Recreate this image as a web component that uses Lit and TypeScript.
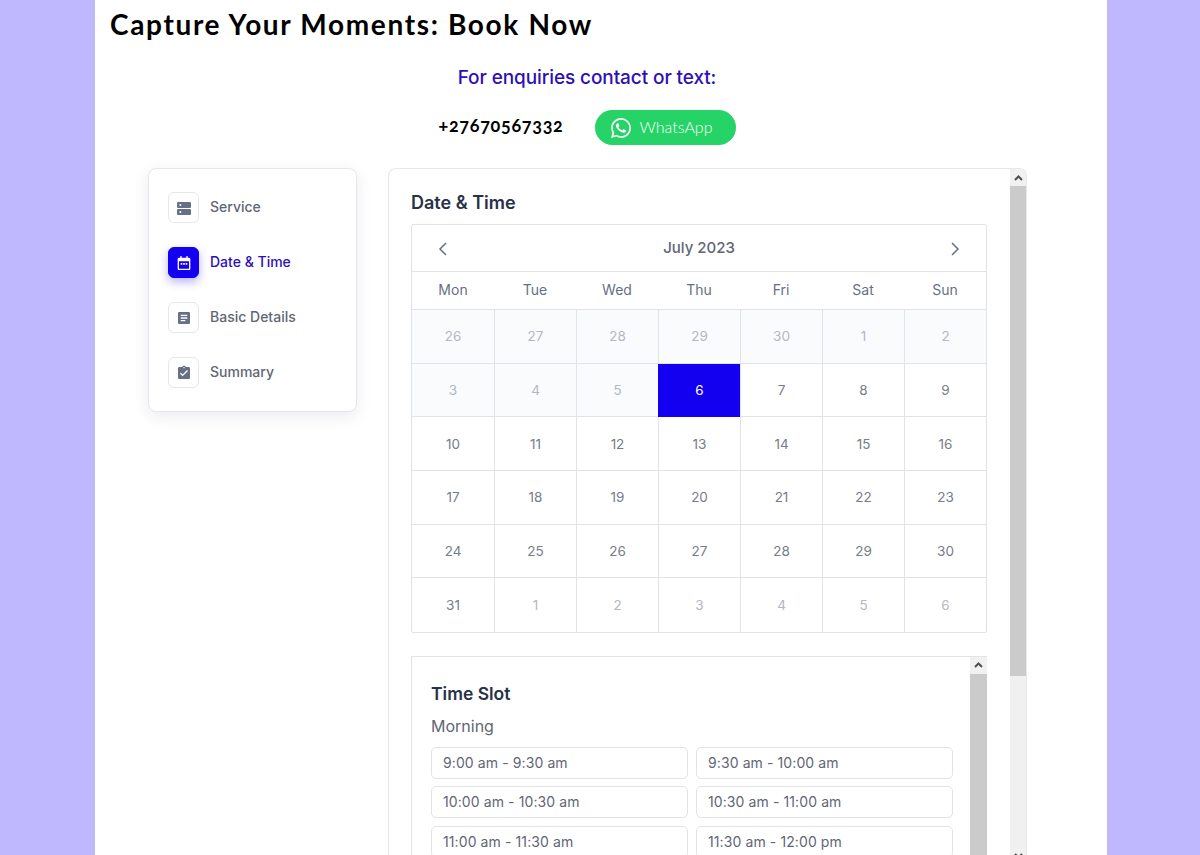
import { LitElement, html, css, svg } from "lit";
import { customElement } from "lit/decorators.js";

const steps = [
  { label: "Service", icon: "dns", active: false },
  { label: "Date & Time", icon: "cal", active: true },
  { label: "Basic Details", icon: "article", active: false },
  { label: "Summary", icon: "check", active: false },
];

const icons: Record<string, unknown> = {
  dns: svg`<path fill-rule="evenodd" d="M3.500 3h17c1.100 0 2 .9 2 2v5c0 1.100-.9 2-2 2h-17c-1.100 0-2-.9-2-2V5c0-1.100.9-2 2-2zM6.500 6a1.500 1.500 0 100 3 1.500 1.500 0 000-3zM3.500 13.500h17c1.100 0 2 .9 2 2v5c0 1.100-.9 2-2 2h-17c-1.100 0-2-.9-2-2v-5c0-1.100.9-2 2-2zM6.500 16.500a1.500 1.500 0 100 3 1.500 1.500 0 000-3z"/>`,
  cal: svg`<path fill-rule="evenodd" d="M6.500 1.500h2V4h7V1.500h2V4h2c1.100 0 2 .9 2 2v14.500c0 1.100-.9 2-2 2h-15c-1.100 0-2-.9-2-2V6c0-1.100.9-2 2-2h2V1.500zM4.500 9.500v11h15v-11h-15zM7 12h2.500v2.500H7V12zm3.750 0h2.500v2.500h-2.500V12zM14.500 12H17v2.500h-2.500V12z"/>`,
  article: svg`<path d="M19 3H5c-1.100 0-2 .9-2 2v14c0 1.100.9 2 2 2h14c1.100 0 2-.9 2-2V5c0-1.100-.9-2-2-2zm-5 14H7v-2h7v2zm3-4H7v-2h10v2zm0-4H7V7h10v2z"/>`,
  check: svg`<path d="M19 3h-4.180C14.400 1.840 13.300 1 12 1c-1.300 0-2.400.84-2.820 2H5c-1.100 0-2 .9-2 2v14c0 1.100.9 2 2 2h14c1.100 0 2-.9 2-2V5c0-1.100-.9-2-2-2zm-7 0c.55 0 1 .45 1 1s-.45 1-1 1-1-.45-1-1 .45-1 1-1zm-2 14l-4-4 1.410-1.410L10 14.170l6.590-6.590L18 9l-8 8z"/>`,
};

const whatsapp = "M17.472 14.382c-.297-.149-1.758-.867-2.03-.967-.273-.099-.471-.148-.67.15-.197.297-.767.966-.94 1.164-.173.199-.347.223-.644.075-.297-.15-1.255-.463-2.39-1.475-.883-.788-1.48-1.761-1.653-2.059-.173-.297-.018-.458.13-.606.134-.133.298-.347.446-.52.149-.174.198-.298.298-.497.099-.198.05-.371-.025-.52-.075-.149-.669-1.612-.916-2.207-.242-.579-.487-.5-.669-.51-.173-.008-.371-.01-.57-.01-.198 0-.52.074-.792.372-.272.297-1.04 1.016-1.04 2.479 0 1.462 1.065 2.875 1.213 3.074.149.198 2.096 3.2 5.077 4.487.709.306 1.262.489 1.694.625.712.227 1.36.195 1.871.118.571-.085 1.758-.719 2.006-1.413.248-.694.248-1.289.173-1.413-.074-.124-.272-.198-.57-.347m-5.421 7.403h-.004a9.87 9.87 0 01-5.031-1.378l-.361-.214-3.741.982.998-3.648-.235-.374a9.86 9.86 0 01-1.51-5.26c.001-5.45 4.436-9.884 9.888-9.884 2.64 0 5.122 1.03 6.988 2.898a9.825 9.825 0 012.893 6.994c-.003 5.45-4.437 9.884-9.885 9.884m8.413-18.297A11.815 11.815 0 0012.05 0C5.495 0 .16 5.335.157 11.892c0 2.096.547 4.142 1.588 5.945L.057 24l6.305-1.654a11.882 11.882 0 005.683 1.448h.005c6.554 0 11.89-5.335 11.893-11.893a11.821 11.821 0 00-3.48-8.413z";

const weekdays = ["Mon", "Tue", "Wed", "Thu", "Fri", "Sat", "Sun"];
type Day = { n: number; kind: "past" | "sel" | "now" | "next" };
const days: Day[] = [
  ...[26, 27, 28, 29, 30, 1, 2, 3, 4, 5].map((n) => ({ n, kind: "past" as const })),
  { n: 6, kind: "sel" as const },
  ...Array.from({ length: 25 }, (_, i) => ({ n: i + 7, kind: "now" as const })),
  ...[1, 2, 3, 4, 5, 6].map((n) => ({ n, kind: "next" as const })),
];

const slots = [
  "9:00 am - 9:30 am", "9:30 am - 10:00 am",
  "10:00 am - 10:30 am", "10:30 am - 11:00 am",
  "11:00 am - 11:30 am", "11:30 am - 12:00 pm",
];

@customElement("app-root")
export class AppRoot extends LitElement {
  static styles = css`
    :host { display: block; height: 855px; overflow: hidden; background: #bfb8ff; font-family: "Inter", "Liberation Sans", sans-serif; }
    .page { width: 1012px; height: 855px; margin-left: 95px; background: #fff; overflow: hidden; }
    h1 { margin: 0; padding: 5px 0 0 15px; height: 44px; box-sizing: border-box; font: 700 28px/38px "Lato", sans-serif; letter-spacing: 1.65px; color: #000; }
    .enq { margin: 18px 0 0; width: 984px; text-align: center; font: 500 19px/32px "Inter", sans-serif; letter-spacing: -.1px; color: #2e0fb8; }
    .contact { display: flex; align-items: center; justify-content: center; gap: 31px; width: 984px; margin-top: 16px; height: 35px; }
    .phone { padding-bottom: 5px; font: 700 18px/24px "Lato", sans-serif; letter-spacing: .7px; font-variant-numeric: oldstyle-nums; color: #000; }
    .wa { display: flex; align-items: center; gap: 9px; width: 141px; height: 35px; box-sizing: border-box; padding: 0 0 2px 16px; border-radius: 18px; background: #25d366; color: #fff; font: 300 16px/20px "Lato", sans-serif; }
    .wa svg { width: 20px; height: 20px; fill: #fff; display: block; margin-top: 2px; }
    .main { display: flex; align-items: flex-start; margin: 23px 0 0 53px; gap: 31px; }
    .steps { width: 209px; height: 244px; box-sizing: border-box; padding: 23px 19px; border: 1px solid #e5e7eb; border-radius: 8px; background: #fff; box-shadow: 0 4px 16px rgba(30, 30, 90, .09); display: flex; flex-direction: column; gap: 24px; }
    .step { display: flex; align-items: center; gap: 11px; font: 500 14px/20px "Inter", sans-serif; color: #5f6675; }
    .step.on { color: #2e0fb8; }
    .label { padding-bottom: 2px; }
    .badge { width: 31px; height: 31px; box-sizing: border-box; border: 1px solid #e5e7eb; border-radius: 6px; background: #fff; display: flex; align-items: center; justify-content: center; }
    .badge svg { width: 16px; height: 16px; fill: #667085; display: block; }
    .step.on .badge { background: #1400f0; border-color: #1400f0; box-shadow: 0 4px 10px rgba(20, 0, 240, .3); }
    .step.on .badge svg { fill: #fff; }
    .panel { width: 639px; height: 696px; box-sizing: border-box; border: 1px solid #e5e7eb; border-bottom: 0; border-radius: 8px 8px 0 0; display: flex; overflow: hidden; }
    .content { flex: 1; min-width: 0; padding: 22px 22px 0; }
    h2 { margin: 0 0 10px; font: 600 18px/23px "Inter", sans-serif; color: #273249; }
    .cal { width: 576px; box-sizing: border-box; border: 1px solid #e0e3e8; border-radius: 2px; }
    .cal-head { height: 46px; border-bottom: 1px solid #e0e3e8; display: flex; align-items: center; justify-content: space-between; padding: 0 25px; font: 500 15px/20px "Inter", sans-serif; color: #5f6675; }
    .cal-head svg { width: 12px; height: 14px; fill: none; stroke: #667085; stroke-width: 1.500; display: block; margin-top: 2px; }
    .week, .grid { display: grid; grid-template-columns: repeat(7, 1fr); }
    .week { box-sizing: border-box; height: 38px; padding-bottom: 2px; border-bottom: 1px solid #e0e3e8; align-items: center; text-align: center; font: 400 14px/18px "Inter", sans-serif; color: #667085; }
    .cell { height: 53.700px; box-sizing: border-box; border-left: 1px solid #e0e3e8; border-bottom: 1px solid #e0e3e8; display: flex; align-items: center; justify-content: center; font: 400 13.500px/18px "Inter", sans-serif; color: #767c89; }
    .cell:nth-child(7n + 1) { border-left: 0; }
    .cell:nth-last-child(-n + 7) { border-bottom: 0; }
    .cell.past { background: #fafbfc; color: #b3b8c2; }
    .cell.next { color: #b3b8c2; }
    .cell.sel { background: #1400f0; color: #fff; border-color: #1400f0; }
    .slot-box { width: 576px; height: 300px; box-sizing: border-box; margin-top: 22.600px; border: 1px solid #e0e3e8; border-right: 0; display: flex; }
    .slot-main { flex: 1; min-width: 0; padding: 25px 17px 0 19px; }
    h3 { margin: 0; font: 600 17.500px/24px "Inter", sans-serif; color: #273249; }
    h4 { margin: 8px 0 0; font: 400 16px/24px "Inter", sans-serif; color: #5f6675; }
    .slots { display: grid; grid-template-columns: 1fr 1fr; gap: 7.500px 8px; margin-top: 9px; }
    .slot { height: 32px; box-sizing: border-box; padding-left: 11px; border: 1px solid #e0e3e8; border-radius: 5px; font: 400 14px/30px "Inter", sans-serif; letter-spacing: .1px; color: #5f6675; }
    .bar { width: 17px; flex: none; background: #f0f0f0; display: flex; flex-direction: column; }
    .bar.outer { width: 16px; }
    .arrow { height: 17px; flex: none; display: flex; align-items: center; justify-content: center; background: #f1f1f1; }
    .arrow svg { width: 9px; height: 6px; fill: none; stroke: #505050; stroke-width: 2; display: block; }
    .track { flex: 1; min-height: 0; }
    .thumb { background: #cbcbcb; }
    .outer .thumb { height: 490px; }
    .inner .thumb { height: 100%; }
  `;

  private bar(kind: string) {
    return html`<div class="bar ${kind}">
      <div class="arrow"><svg viewBox="0 0 9 6"><path d="M1 5l3.500-3.500L8 5"/></svg></div>
      <div class="track"><div class="thumb"></div></div>
      <div class="arrow"><svg viewBox="0 0 9 6"><path d="M1 1l3.500 3.500L8 1"/></svg></div>
    </div>`;
  }

  render() {
    return html`<div class="page">
      <h1>Capture Your Moments: Book Now</h1>
      <p class="enq">For enquiries contact or text:</p>
      <div class="contact">
        <span class="phone">+27670567332</span>
        <span class="wa"><svg viewBox="0 0 24 24"><path d=${whatsapp}/></svg>WhatsApp</span>
      </div>
      <div class="main">
        <div class="steps">
          ${steps.map((s) => html`<div class="step ${s.active ? "on" : ""}">
            <span class="badge"><svg viewBox="0 0 24 24">${icons[s.icon]}</svg></span><span class="label">${s.label}</span>
          </div>`)}
        </div>
        <div class="panel">
          <div class="content">
            <h2>Date &amp; Time</h2>
            <div class="cal">
              <div class="cal-head">
                <svg viewBox="0 0 12 14"><path d="M9 1L3 7l6 6"/></svg>
                <span>July 2023</span>
                <svg viewBox="0 0 12 14"><path d="M3 1l6 6-6 6"/></svg>
              </div>
              <div class="week">${weekdays.map((d) => html`<span>${d}</span>`)}</div>
              <div class="grid">${days.map((d) => html`<div class="cell ${d.kind}">${d.n}</div>`)}</div>
            </div>
            <div class="slot-box">
              <div class="slot-main">
                <h3>Time Slot</h3>
                <h4>Morning</h4>
                <div class="slots">${slots.map((s) => html`<div class="slot">${s}</div>`)}</div>
              </div>
              ${this.bar("inner")}
            </div>
          </div>
          ${this.bar("outer")}
        </div>
      </div>
    </div>`;
  }
}
